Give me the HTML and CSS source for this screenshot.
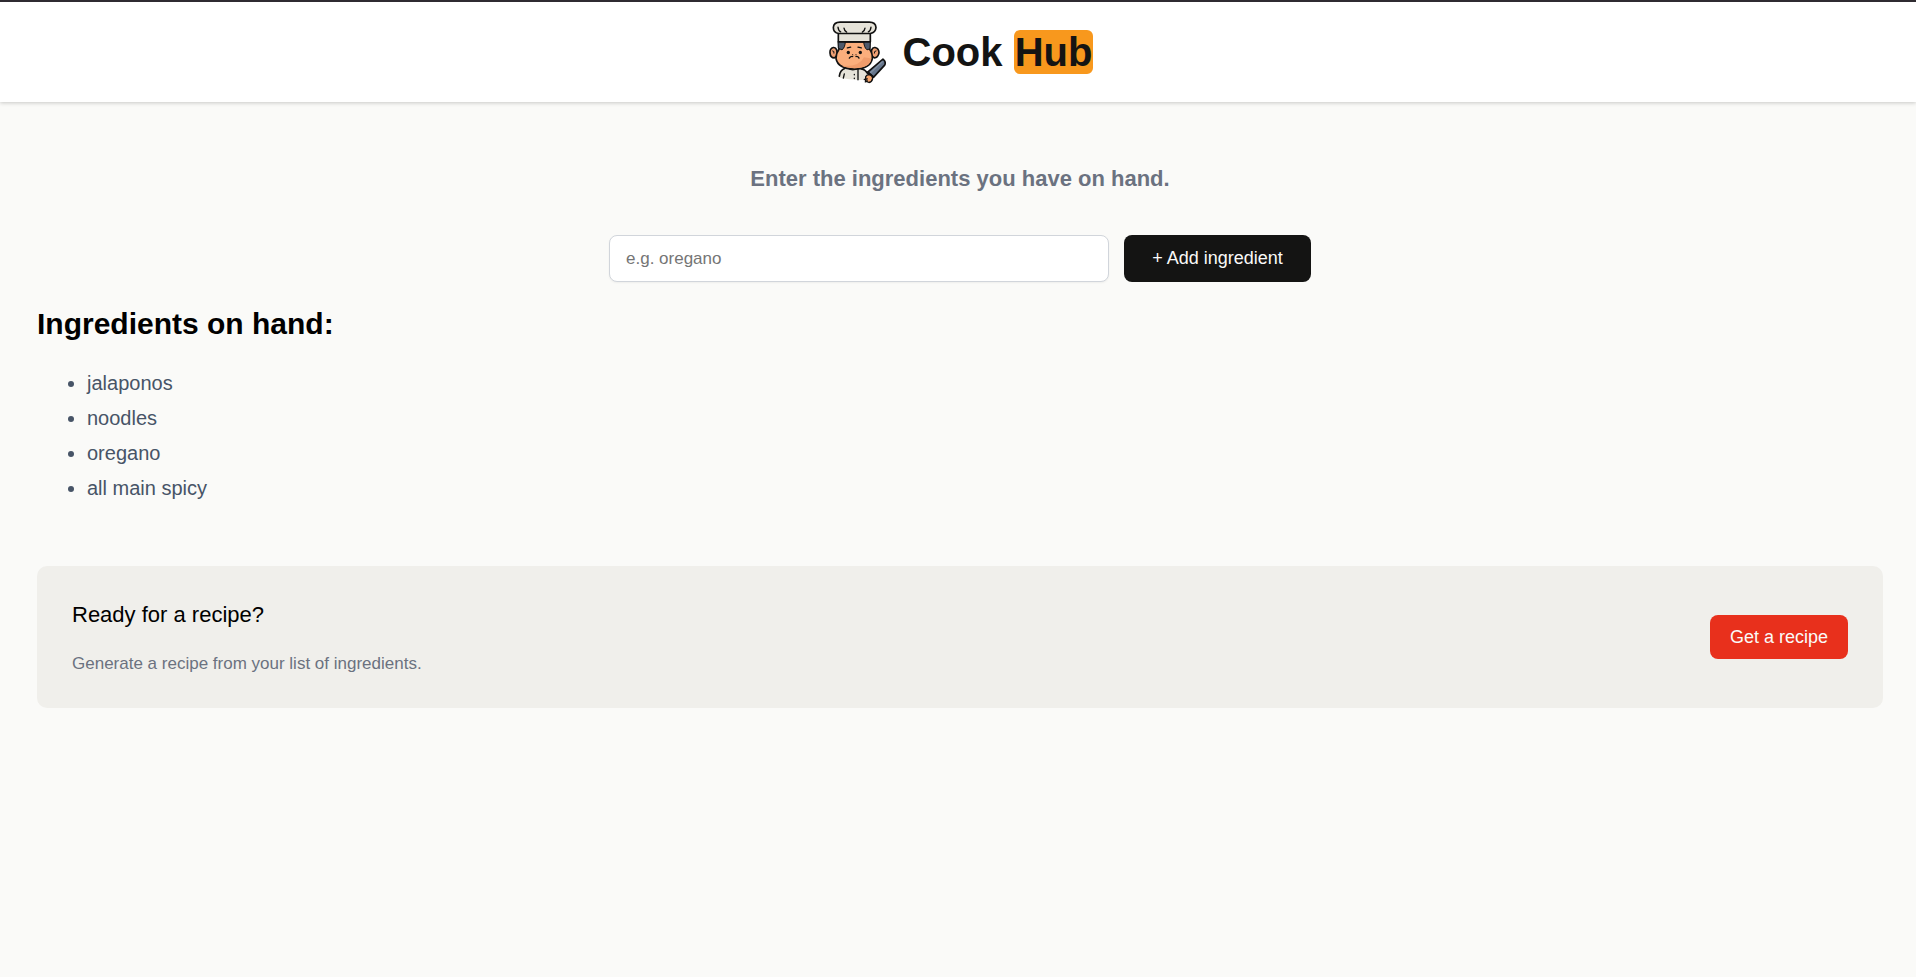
FILE: index.html
```html
<!DOCTYPE html>
<html lang="en">
<head>
<meta charset="utf-8">
<meta name="viewport" content="width=device-width, initial-scale=1">
<title>Cook Hub</title>
<link rel="stylesheet" href="styles.css">
</head>
<body>
<header class="site-header">
  <svg class="logo" viewBox="24 60 174 189" fill="none" stroke="#111" stroke-width="5" stroke-linecap="round" stroke-linejoin="round" aria-hidden="true">
    <path d="M58 228Q60 208 76 204H122Q136 206 143 222L136 238Q94 240 58 232Z" fill="#e6e3d9" stroke="none"/>
    <path d="M58 227Q60 209 74 204M124 205Q136 207 143 219"/>
    <path d="M73 220L70 233M84 203Q98 213 114 203V238" stroke-width="4"/>
    <path d="M103 222V223M103 233V234" stroke-width="4"/>
    <path d="M50 148Q47 140 40 141Q29 144 30 157Q31 172 43 172L53 165ZM155 148Q158 140 165 141Q177 144 177 157Q174 172 163 172L153 165Z" fill="#f0a074"/>
    <path d="M38 151Q44 151 42 158M168 151Q162 151 163 158" stroke-width="3"/>
    <path d="M57 124H149V146Q158 158 157 174Q151 205 103 206Q54 205 48 174Q48 158 57 146Z" fill="#fbae7c"/>
    <path d="M154 174Q151 203 103 203Q79 202 65 196Q118 200 132 170Z" fill="#f09c6b" stroke="none"/>
    <path d="M55 123H76Q75 142 66 148L56 144ZM131 123H151L150 145L141 148Q132 141 131 123Z" fill="#4d596b" stroke-width="3"/>
    <path d="M55 98H151V124H55Z" fill="#e6e3d9"/>
    <path d="M56 99Q40 97 40 81Q41 65 60 65H148Q167 65 168 81Q167 96 151 99Z" fill="#e6e3d9"/>
    <path d="M54 80Q55 91 62 94M72 83Q73 91 80 95M153 80Q152 91 145 94M135 83Q134 91 127 95" stroke-width="4"/>
    <path d="M82 142L92 140M114 140L124 142M88 173Q92 167 98 168M108 168Q114 167 117 173" stroke-width="4"/>
    <path d="M98 162L99 163M107 163L108 162" stroke-width="3"/>
    <circle cx="85" cy="156" r="5" fill="#111" stroke="none"/>
    <circle cx="121" cy="156" r="5" fill="#111" stroke="none"/>
    <path d="M143 215L189 176Q199 183 194 194L161 230Z" fill="#65758b"/>
    <path d="M152 216L187 184" stroke="#8190a3" stroke-width="4"/>
    <path d="M144 215L160 230"/>
    <path d="M137 229Q139 223 147 222Q158 225 158 234Q156 244 147 246L137 242Z" fill="#f7a56c" stroke-width="4"/>
    <path d="M133 237L142 235M136 244L142 241" stroke-width="4"/>
  </svg>
  <h1 class="brand">Cook <span class="brand-mark">Hub</span></h1>
</header>
<main class="content">
  <form class="ingredient-form">
    <label class="form-title" for="ingredient">Enter the ingredients you have on hand.</label>
    <div class="form-row">
      <input class="ingredient-input" id="ingredient" type="text" placeholder="e.g. oregano">
      <button class="add-button" type="button">+ Add ingredient</button>
    </div>
  </form>
  <section>
    <h2 class="list-title">Ingredients on hand:</h2>
    <ul class="ingredient-list">
      <li>jalaponos</li>
      <li>noodles</li>
      <li>oregano</li>
      <li>all main spicy</li>
    </ul>
  </section>
  <section class="recipe-panel">
    <div>
      <h3 class="recipe-title">Ready for a recipe?</h3>
      <p class="recipe-text">Generate a recipe from your list of ingredients.</p>
    </div>
    <button class="recipe-button" type="button">Get a recipe</button>
  </section>
</main>
</body>
</html>
```
FILE: styles.css
```css
* {
  box-sizing: border-box;
}

body {
  margin: 0;
  background: #fafaf8;
  color: #000;
  font-family: Arial, "Liberation Sans", sans-serif;
}

button,
input {
  font-family: inherit;
}

.site-header {
  display: flex;
  align-items: center;
  justify-content: center;
  gap: 17px;
  height: 102px;
  padding: 0 33px 0 38px;
  border-top: 2px solid #2f2b31;
  background: #fff;
  box-shadow: 0 1px 4px rgba(0, 0, 0, 0.2);
}

.logo {
  width: 58px;
  height: 64px;
}

.brand {
  margin: 0;
  color: #141413;
  font-size: 40px;
  line-height: 44px;
}

.brand-mark {
  display: inline-block;
  padding: 0 1px;
  border-radius: 6px;
  background: #f8981d;
}

.content {
  padding: 62px 33px 38px 37px;
}

.ingredient-form {
  display: flex;
  flex-direction: column;
  align-items: center;
  gap: 41px;
}

.form-title {
  color: #6b7280;
  font-size: 22px;
  font-weight: 700;
  line-height: 30px;
}

.form-row {
  display: flex;
  justify-content: center;
  gap: 15px;
  width: 100%;
}

.ingredient-input {
  flex: 0 1 500px;
  min-width: 0;
  height: 47px;
  padding: 0 16px;
  border: 1px solid #d1d5db;
  border-radius: 8px;
  background: #fff;
  box-shadow: 0 1px 2px rgba(0, 0, 0, 0.05);
  font-size: 17px;
}

.ingredient-input::placeholder {
  color: #757575;
}

.add-button {
  width: 187px;
  height: 47px;
  padding: 0;
  border: 0;
  border-radius: 8px;
  background: #141413;
  color: #fafaf8;
  font-size: 18px;
}

.list-title {
  margin: 25px 0 0;
  font-size: 30px;
  line-height: 34px;
}

.ingredient-list {
  margin: 25px 0 0;
  padding-left: 50px;
  color: #475467;
  font-size: 20px;
  line-height: 35px;
}

.recipe-panel {
  display: flex;
  align-items: center;
  justify-content: space-between;
  gap: 24px;
  margin-top: 60px;
  padding: 34px 35px;
  border-radius: 10px;
  background: #f0efeb;
}

.recipe-title {
  margin: 0;
  font-size: 22px;
  font-weight: 400;
  line-height: 30px;
}

.recipe-text {
  margin: 24px 0 0;
  color: #6b7280;
  font-size: 17px;
  line-height: 20px;
}

.recipe-button {
  flex: none;
  width: 138px;
  height: 44px;
  padding: 0;
  border: 0;
  border-radius: 8px;
  background: #e8301c;
  color: #fafaf8;
  font-size: 18px;
}
```
